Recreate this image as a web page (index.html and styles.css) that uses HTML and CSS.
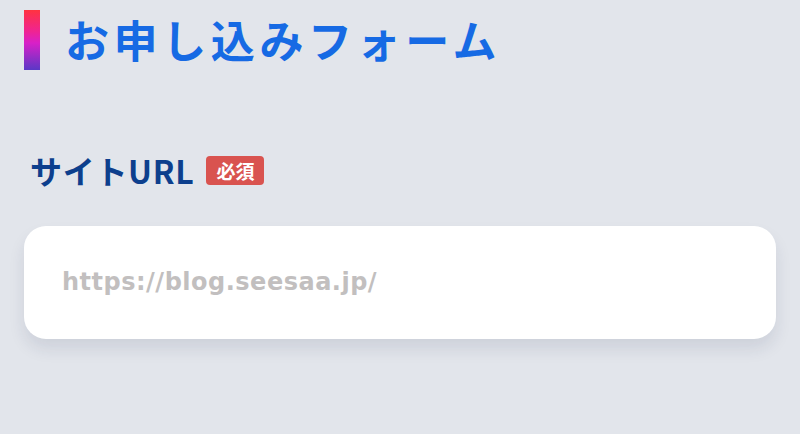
FILE: index.html
```html
<!DOCTYPE html>
<html lang="ja">
<head>
<meta charset="utf-8">
<link rel="stylesheet" href="styles.css">
</head>
<body>
<div class="page">
  <h1 class="title"><span class="bar"></span><span class="title-text">お申し込みフォーム</span></h1>
  <div class="field">
    <div class="label-row"><span class="label">サイトURL</span><span class="badge">必須</span></div>
    <div class="input"><span class="placeholder">https://blog.seesaa.jp/</span></div>
  </div>
</div>
</body>
</html>
```
FILE: styles.css
```css
html, body { margin: 0; padding: 0; }
body {
  background: #e2e5eb;
  width: 800px;
  height: 434px;
  overflow: hidden;
  font-family: "Noto Sans CJK JP", "Noto Sans", sans-serif;
}
.page { padding: 10px 24px 0 24px; }
.title {
  margin: 0;
  display: flex;
  align-items: center;
  gap: 25px;
  height: 60px;
}
.bar {
  width: 16px;
  height: 60px;
  background: linear-gradient(180deg, #ff3340 0%, #f02490 35%, #d820c8 55%, #5a38c6 100%);
}
.title-text {
  font-size: 44px;
  font-weight: 700;
  color: #166ae4;
  line-height: 1;
  letter-spacing: 4.6px;
  margin-top: -2px;
}
.field { margin-top: 84px; }
.label-row {
  display: flex;
  align-items: center;
  gap: 12px;
  padding-left: 6px;
  height: 32px;
}
.label {
  font-size: 32px;
  font-weight: 700;
  color: #0d3f8d;
  line-height: 1;
  letter-spacing: 0.7px;
}
.badge {
  background: #d9534f;
  color: #fff;
  font-size: 19px;
  font-weight: 700;
  line-height: 1;
  padding: 5px 10px;
  border-radius: 4px;
}
.input {
  margin-top: 40px;
  width: 752px;
  height: 113px;
  background: #fff;
  border-radius: 22px;
  box-shadow: 0 10px 16px rgba(30, 40, 80, 0.10);
  display: flex;
  align-items: center;
  box-sizing: border-box;
  padding-left: 38px;
}
.placeholder {
  font-family: "DejaVu Sans", sans-serif;
  font-weight: 700;
  font-size: 24px;
  letter-spacing: 0.5px;
  color: #c2bfbf;
  margin-top: -2px;
}
```
